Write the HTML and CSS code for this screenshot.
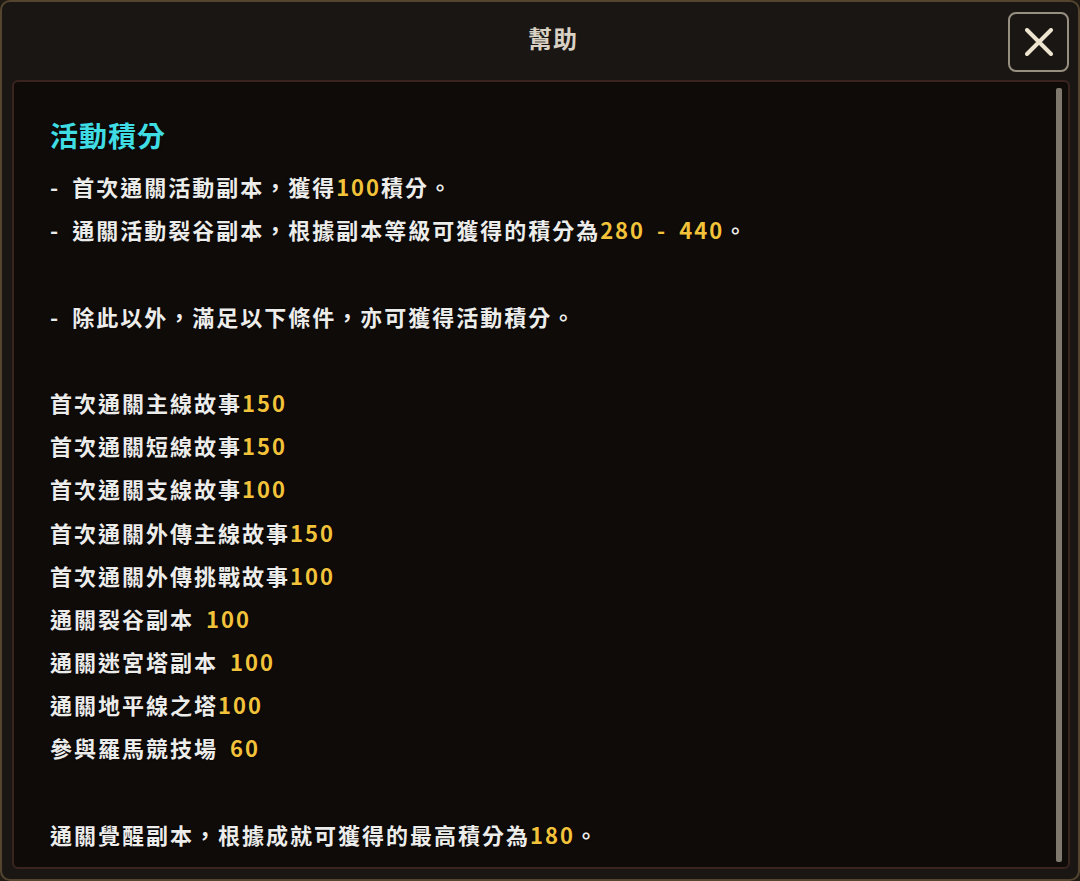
FILE: index.html
```html
<!DOCTYPE html>
<html lang="zh-TW">
<head>
<meta charset="utf-8">
<title>幫助</title>
<link rel="stylesheet" href="styles.css">
</head>
<body>
<div class="frame">
  <div class="header">
    <div class="title">幫助</div>
    <button class="close" aria-label="關閉">
      <svg width="28" height="28" viewBox="0 0 28 28"><path d="M2 2 L26 26 M26 2 L2 26" stroke="#ece4cf" stroke-width="4" stroke-linecap="round" fill="none"/></svg>
    </button>
  </div>
  <div class="panel">
    <div class="content">
      <div class="heading">活動積分</div>
      <div class="line">- 首次通關活動副本，獲得<span class="num">100</span>積分。</div>
      <div class="line">- 通關活動裂谷副本，根據副本等級可獲得的積分為<span class="num">280 - 440</span>。</div>
      <div class="line blank"></div>
      <div class="line">- 除此以外，滿足以下條件，亦可獲得活動積分。</div>
      <div class="line blank"></div>
      <div class="line">首次通關主線故事<span class="num">150</span></div>
      <div class="line">首次通關短線故事<span class="num">150</span></div>
      <div class="line">首次通關支線故事<span class="num">100</span></div>
      <div class="line">首次通關外傳主線故事<span class="num">150</span></div>
      <div class="line">首次通關外傳挑戰故事<span class="num">100</span></div>
      <div class="line">通關裂谷副本 <span class="num">100</span></div>
      <div class="line">通關迷宮塔副本 <span class="num">100</span></div>
      <div class="line">通關地平線之塔<span class="num">100</span></div>
      <div class="line">參與羅馬競技場 <span class="num">60</span></div>
      <div class="line blank"></div>
      <div class="line">通關覺醒副本，根據成就可獲得的最高積分為<span class="num">180</span>。</div>
    </div>
    <div class="scrollbar"></div>
  </div>
</div>
</body>
</html>
```
FILE: styles.css
```css
html, body {
  margin: 0;
  padding: 0;
  background: #201a14;
}
body {
  font-family: "Noto Sans CJK TC", "Noto Sans", sans-serif;
}
.frame {
  width: 1080px;
  height: 881px;
  box-sizing: border-box;
  border: 2px solid #54452f;
  border-radius: 10px;
  background: #1a1614;
  display: flex;
  flex-direction: column;
}
.header {
  height: 78px;
  flex: none;
  display: grid;
  grid-template-columns: 1fr auto 1fr;
  align-items: center;
  padding-left: 26px;
  box-sizing: border-box;
}
.title {
  grid-column: 2;
  font-size: 24px;
  letter-spacing: 1px;
  color: #d9d2c4;
  font-weight: 700;
  margin-top: -8px;
}
.close {
  grid-column: 3;
  justify-self: end;
  align-self: start;
  margin-top: 10px;
  margin-right: 9px;
  width: 61px;
  height: 60px;
  box-sizing: border-box;
  border: 2px solid #978f80;
  border-radius: 8px;
  background: #1a1614;
  padding: 0;
  display: flex;
  align-items: center;
  justify-content: center;
}
.panel {
  flex: 1;
  margin: 0 8px 10px 10px;
  border: 2px solid #3a2420;
  border-radius: 6px;
  background: #0f0b09;
  display: flex;
}
.content {
  flex: 1;
  padding: 33px 0 0 36px;
  color: #ececea;
  font-size: 22px;
  font-weight: 700;
  letter-spacing: 2px;
  word-spacing: 5px;
  text-shadow: 0 0 2px #000;
}
.heading {
  font-size: 28px;
  line-height: 40px;
  letter-spacing: 1px;
  word-spacing: 0;
  color: #40dce4;
  margin-bottom: 10px;
}
.line {
  height: 43.2px;
  line-height: 43.2px;
  white-space: pre;
}
.num {
  color: #f2c23a;
  font-weight: 700;
}
.scrollbar {
  width: 6px;
  margin: 6px 6px 5px 0;
  border-radius: 2px;
  background: #7e786d;
}
```
